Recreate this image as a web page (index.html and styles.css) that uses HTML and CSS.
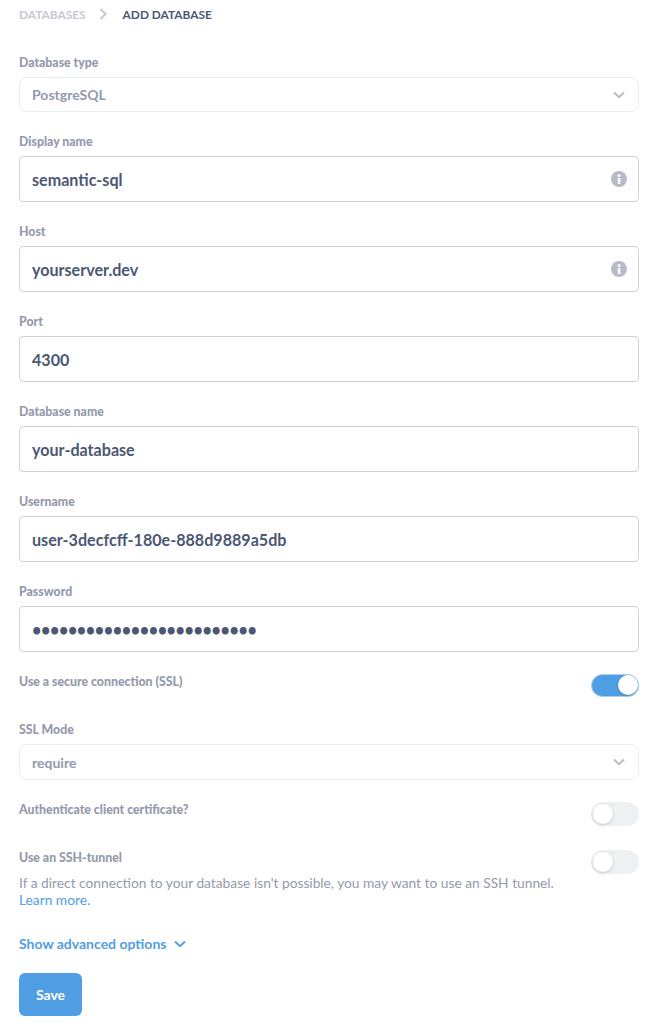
FILE: index.html
```html
<!DOCTYPE html>
<html lang="en">
<head>
    <meta charset="UTF-8">
    <meta name="viewport" content="width=device-width, initial-scale=1.0">
    <title>Add Database</title>
    <link rel="stylesheet" href="styles.css">
</head>
<body>

    <!-- Breadcrumbs -->
    <div class="breadcrumbs">
        <span class="crumb">DATABASES</span>
        <svg class="crumb-arrow" viewBox="0 0 8 12" width="8" height="12"><path d="M1.5 1 L6.5 6 L1.5 11" fill="none" stroke="#c6c9d2" stroke-width="2"/></svg>
        <span class="crumb crumb-current">ADD DATABASE</span>
    </div>

    <form class="db-form">
        <div class="field">
            <label>Database type</label>
            <div class="select-box">
                <span>PostgreSQL</span>
                <svg class="chevron" viewBox="0 0 12 8" width="12" height="8"><path d="M1 1.5 L6 6.2 L11 1.5" fill="none" stroke="#b8bbc7" stroke-width="2"/></svg>
            </div>
        </div>

        <div class="field">
            <label>Display name</label>
            <div class="input-box">
                <input type="text" value="semantic-sql">
                <svg class="info" viewBox="0 0 16 16" width="16" height="16"><circle cx="8" cy="8" r="8" fill="#b8bbc7"/><rect x="6.8" y="7" width="2.6" height="5.8" fill="#fff"/><circle cx="8" cy="4.4" r="1.5" fill="#fff"/></svg>
            </div>
        </div>

        <div class="field">
            <label>Host</label>
            <div class="input-box">
                <input type="text" value="yourserver.dev">
                <svg class="info" viewBox="0 0 16 16" width="16" height="16"><circle cx="8" cy="8" r="8" fill="#b8bbc7"/><rect x="6.8" y="7" width="2.6" height="5.8" fill="#fff"/><circle cx="8" cy="4.4" r="1.5" fill="#fff"/></svg>
            </div>
        </div>

        <div class="field">
            <label>Port</label>
            <div class="input-box"><input type="text" value="4300"></div>
        </div>

        <div class="field">
            <label>Database name</label>
            <div class="input-box"><input type="text" value="your-database"></div>
        </div>

        <div class="field">
            <label>Username</label>
            <div class="input-box"><input type="text" value="user-3decfcff-180e-888d9889a5db"></div>
        </div>

        <div class="field">
            <label>Password</label>
            <div class="input-box"><input class="input-password" type="password" value="aaaaaaaaaaaaaaaaaaaaaaaaa"></div>
        </div>

        <!-- Toggles and SSL options -->
        <div class="toggle-row toggle-row-ssl">
            <label>Use a secure connection (SSL)</label>
            <span class="toggle toggle-on"></span>
        </div>

        <div class="field">
            <label>SSL Mode</label>
            <div class="select-box select-box-tall">
                <span>require</span>
                <svg class="chevron" viewBox="0 0 12 8" width="12" height="8"><path d="M1 1.5 L6 6.2 L11 1.5" fill="none" stroke="#b8bbc7" stroke-width="2"/></svg>
            </div>
        </div>

        <div class="toggle-row toggle-row-cert">
            <label>Authenticate client certificate?</label>
            <span class="toggle"></span>
        </div>

        <div class="toggle-row toggle-row-ssh">
            <div>
                <label>Use an SSH-tunnel</label>
                <p class="help">If a direct connection to your database isn't possible, you may want to use an SSH tunnel. <a href="#">Learn more.</a></p>
            </div>
            <span class="toggle"></span>
        </div>

        <a class="advanced" href="#">
            Show advanced options
            <svg viewBox="0 0 12 8" width="12" height="8"><path d="M1 1.5 L6 6.2 L11 1.5" fill="none" stroke="#509ee3" stroke-width="2"/></svg>
        </a>

        <button class="save" type="button">Save</button>
    </form>

</body>
</html>
```

FILE: styles.css
```css
/* Page */
html, body {
    margin: 0;
    background-color: white;
    font-family: Lato, "Noto Sans", sans-serif;
    color: #4c5773;
}

body {
    padding: 7px 22px 0 19px;
}

/* Breadcrumbs */
.breadcrumbs {
    display: flex;
    align-items: center;
    height: 14px;
    font-size: 11.9px;
    font-weight: 700;
}

.crumb {
    color: #c6c9d2;
}

.crumb-arrow {
    margin: 0 16px 0 13px;
}

.crumb-current {
    color: #4c5773;
}

/* Form fields */
.db-form {
    display: flex;
    flex-direction: column;
    margin-top: 34px;
}

label {
    display: block;
    height: 16px;
    line-height: 16px;
    font-size: 12.3px;
    font-weight: 900;
    color: #949aab;
}

.field {
    margin-bottom: 22px;
}

.field label {
    margin-bottom: 6px;
}

.select-box {
    display: flex;
    justify-content: space-between;
    align-items: center;
    box-sizing: border-box;
    height: 35px;
    padding: 0 13px 0 12px;
    border: 1px solid #e8f0ee;
    border-radius: 8px;
    font-size: 14px;
    font-weight: 700;
    color: #949aab;
}

.select-box-tall {
    height: 36px;
}

.input-box {
    display: flex;
    align-items: center;
    box-sizing: border-box;
    height: 46px;
    padding-right: 11px;
    border: 1px solid #d0d2d6;
    border-radius: 4px;
}

.input-box input {
    flex: 1;
    min-width: 0;
    height: 100%;
    box-sizing: border-box;
    padding: 0 12px;
    border: 0;
    outline: none;
    background: transparent;
    font-family: inherit;
    font-size: 16.1px;
    font-weight: 700;
    color: #4c5773;
}

.input-box .input-password {
    letter-spacing: -0.36px;
}

/* Toggles */
.toggle-row {
    display: flex;
    justify-content: space-between;
    align-items: flex-start;
}

.toggle-row-ssl {
    margin-bottom: 25px;
}

.toggle-row-cert {
    margin-bottom: 24px;
}

.toggle {
    position: relative;
    flex: none;
    box-sizing: border-box;
    width: 48px;
    height: 24px;
    border-radius: 12px;
    background-color: #edf1f4;
}

/* Knob sits over the track */
.toggle::after {
    content: "";
    position: absolute;
    top: 2px;
    left: 2px;
    width: 20px;
    height: 20px;
    border-radius: 50%;
    background-color: white;
    box-shadow: 0 1px 3px rgba(0, 0, 0, 0.18);
}

.toggle-on {
    height: 23px;
    background-color: #509ee3;
    border: 1px solid #a9cff1;
}

.toggle-on::after {
    top: 0;
    left: auto;
    right: 0;
}

.help {
    width: 560px;
    margin: 8px 0 0;
    font-size: 13.75px;
    line-height: 17px;
    color: #949aab;
}

.help a {
    display: block;
    color: #509ee3;
    text-decoration: none;
}

.advanced {
    display: flex;
    align-items: center;
    gap: 8px;
    margin-top: 27px;
    font-size: 14px;
    line-height: 17px;
    font-weight: 700;
    color: #509ee3;
    text-decoration: none;
}

.save {
    align-self: flex-start;
    width: 63px;
    height: 43px;
    margin-top: 21px;
    padding: 0;
    border: 0;
    border-radius: 6px;
    background-color: #509ee3;
    font-family: inherit;
    font-size: 14px;
    font-weight: 700;
    color: white;
}
```
